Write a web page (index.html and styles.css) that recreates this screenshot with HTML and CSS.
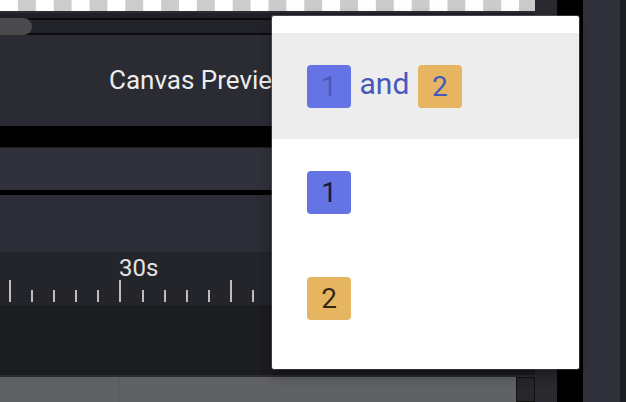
FILE: index.html
```html
<!DOCTYPE html>
<html>
<head>
<meta charset="utf-8">
<link rel="stylesheet" href="styles.css">
</head>
<body>
<div class="screen">
  <div class="main">
    <div class="checker"></div>
    <div class="scroll-sep"></div>
    <div class="scroll-zone"><div class="track"><div class="thumb"></div></div></div>
    <div class="preview"><span class="preview-title">Canvas Preview</span></div>
    <div class="gap-black"></div>
    <div class="panel-b"></div>
    <div class="gap-black2"></div>
    <div class="panel-c"></div>
    <div class="ruler">
      <div class="ruler-labels"><span class="ruler-label">30s</span></div>
      <div class="ticks">
        <span class="tick tick-major"></span><span class="tick"></span><span class="tick"></span><span class="tick"></span><span class="tick"></span>
        <span class="tick tick-major"></span><span class="tick"></span><span class="tick"></span><span class="tick"></span><span class="tick"></span>
        <span class="tick tick-major"></span><span class="tick"></span><span class="tick"></span>
      </div>
    </div>
    <div class="tracks"></div>
    <div class="tracks-sep"></div>
    <div class="hscroll">
      <div class="hscroll-a"></div>
      <div class="hscroll-b"></div>
      <div class="hscroll-box"></div>
    </div>
  </div>
  <div class="col-a"></div>
  <div class="col-black"></div>
  <div class="col-panel"></div>
  <div class="col-edge"></div>

  <div class="menu">
    <div class="menu-item selected">
      <span class="badge badge-blue">1</span>
      <span class="and">and</span>
      <span class="badge badge-orange">2</span>
    </div>
    <div class="menu-item">
      <span class="badge badge-blue">1</span>
    </div>
    <div class="menu-item">
      <span class="badge badge-orange">2</span>
    </div>
  </div>
</div>
</body>
</html>
```

FILE: styles.css
```css
* { box-sizing: border-box; }
html, body { margin: 0; padding: 0; background: #000; }
body { font-family: Roboto, "Noto Sans", sans-serif; }

.screen {
  position: relative;
  width: 626px;
  height: 402px;
  display: flex;
  overflow: hidden;
  background: #000;
}

.main {
  width: 535px;
  flex: none;
  display: flex;
  flex-direction: column;
}

.checker {
  height: 11px;
  background: repeating-conic-gradient(#cccccc 0 25%, #ffffff 0 50%) 0 0 / 35.8px 35.8px;
}
.scroll-sep { height: 2px; background: #2c2d33; }
.scroll-zone {
  height: 22px;
  padding-top: 5px;
  background: #202126;
}
.track {
  height: 17px;
  background: #23242a;
  border-top: 2px solid #0c0c0e;
  border-bottom: 2px solid #0c0c0e;
  position: relative;
}
.thumb {
  position: absolute;
  left: 0;
  top: -2px;
  width: 32px;
  height: 17px;
  background: #4a4a4c;
  border-radius: 0 9px 9px 0;
}

.preview {
  height: 91px;
  background: #2a2b33;
  padding: 32px 0 0 109px;
}
.preview-title {
  display: block;
  font-size: 26px;
  line-height: 26px;
  color: #ececec;
  white-space: nowrap;
}

.gap-black { height: 21px; background: #000; }
.panel-b { height: 43px; background: #30313a; border-top: 1px solid #1b1c20; }
.gap-black2 { height: 5px; background: #000; }
.panel-c { height: 57px; background: #2b2c35; }

.ruler {
  height: 53px;
  background: #24252b;
  padding-top: 4px;
}
.ruler-labels { height: 24px; padding-left: 119px; }
.ruler-label {
  font-size: 24px;
  line-height: 24px;
  color: #e2e2e2;
}
.ticks {
  height: 22px;
  display: flex;
  align-items: flex-end;
  padding-left: 9px;
}
.tick {
  flex: none;
  width: 2px;
  height: 12px;
  margin-right: 20.1px;
  background: #bdbdbd;
}
.tick-major { height: 22px; }

.tracks { height: 70px; background: #1c1d21; }
.tracks-sep { height: 2px; background: #2b2c30; }
.hscroll {
  height: 25px;
  display: flex;
}
.hscroll-a { width: 120px; background: #5f6064; border-right: 1px solid #5a5b5f; }
.hscroll-b { flex: 1; background: #606165; }
.hscroll-box {
  width: 19px;
  background: #26272c;
  border: 1px solid #111;
}

.col-a { width: 22px; flex: none; background: #29292f; }
.col-black { width: 26px; flex: none; background: #000; }
.col-panel { width: 37px; flex: none; background: #30313b; }
.col-edge { width: 6px; flex: none; background: #1e1f23; }

.menu {
  position: absolute;
  left: 272px;
  top: 16px;
  width: 307px;
  height: 353px;
  background: #fff;
  border-radius: 2px;
  padding: 17px 0 18px;
  box-shadow: 0 5px 5px -3px rgba(0,0,0,.2), 0 8px 10px 1px rgba(0,0,0,.14), 0 3px 14px 2px rgba(0,0,0,.12), 0 0 0 1px rgba(160,160,160,.35);
}
.menu-item {
  height: 106px;
  display: flex;
  align-items: center;
  gap: 8.5px;
  padding-left: 35px;
  font-size: 29px;
  color: rgba(0,0,0,0.78);
}
.menu-item.selected {
  background: #ededed;
  color: #4758bb;
}
.badge {
  display: block;
  width: 44px;
  height: 43px;
  line-height: 43px;
  text-align: center;
  border-radius: 4px;
  font-size: 28px;
}
.badge-blue { background: #6474e5; }
.badge-orange { background: #e6b562; }
.and {
  font-size: 30px;
  line-height: 30px;
  margin-bottom: 4px;
}
```
